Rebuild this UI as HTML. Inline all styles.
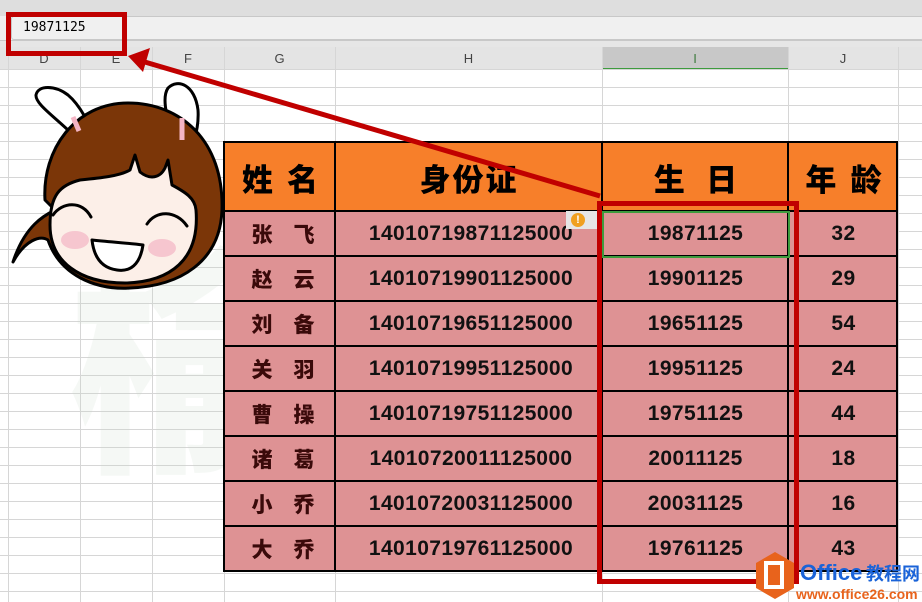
<!DOCTYPE html>
<html><head><meta charset="utf-8"><style>
body{margin:0;width:922px;height:602px;overflow:hidden;background:#fff;position:relative;font-family:"Liberation Sans","Noto Sans CJK SC",sans-serif}
.a{position:absolute}
.grid{position:absolute;left:0;top:69px;width:922px;height:533px;
background-image:linear-gradient(#d6d6d6 1px,transparent 1px);background-size:100% 18px;}
.vl{position:absolute;top:47px;width:1px;height:555px;background:#d6d6d6}
.hd{position:absolute;top:47px;height:22px;font-size:13px;color:#444;text-align:center;line-height:24px}
.cell{position:absolute;display:flex;align-items:center;justify-content:center;font-weight:bold;color:#111;white-space:pre}
.num{font-size:21px;font-family:"Liberation Sans",sans-serif;letter-spacing:0.4px}
.cj{font-family:"Noto Sans CJK SC",sans-serif;font-weight:900;font-size:21px;color:#3a0a0a}
.h{font-family:"Noto Sans CJK SC",sans-serif;font-weight:900;font-size:31px;color:#000}
</style></head><body>
<div class="a" style="left:0;top:0;width:922px;height:16px;background:#dedede"></div>
<div class="a" style="left:0;top:16px;width:922px;height:24px;background:#efefef;border-bottom:1px solid #c8c8c8"></div>
<div class="a" style="left:11px;top:16px;width:911px;height:22px;border:1px solid #c8c8c8;border-radius:3px;background:#f0f0f0"></div>
<div class="a" style="left:23px;top:20px;font-family:'DejaVu Sans Mono',monospace;font-size:13px;color:#000">19871125</div>
<div class="a" style="left:0;top:41px;width:922px;height:6px;background:#e6e6e6"></div>
<div class="a" style="left:0;top:47px;width:922px;height:22px;background:#e4e4e4;border-bottom:1px solid #c4c4c4"></div>
<div class="a" style="left:602px;top:47px;width:186px;height:21px;background:#c8c8c8;border-bottom:2px solid #3e9b3e"></div>
<div class="hd" style="left:8px;width:72px">D</div>
<div class="hd" style="left:80px;width:72px">E</div>
<div class="hd" style="left:152px;width:72px">F</div>
<div class="hd" style="left:224px;width:111px">G</div>
<div class="hd" style="left:335px;width:267px">H</div>
<div class="hd" style="left:602px;width:186px;color:#3e7b3e">I</div>
<div class="hd" style="left:788px;width:110px">J</div>
<div class="grid"></div>
<div class="vl" style="left:8px"></div><div class="vl" style="left:80px"></div><div class="vl" style="left:152px"></div><div class="vl" style="left:224px"></div><div class="vl" style="left:335px"></div><div class="vl" style="left:602px"></div><div class="vl" style="left:788px"></div><div class="vl" style="left:898px"></div>

<div class="a" style="left:70px;top:230px;font-family:'Noto Sans CJK SC';font-weight:900;font-size:240px;color:rgba(200,215,200,0.18);line-height:1">榆</div>

<div class="a" style="left:223px;top:141px;width:675px;height:431px;background:#de9294"></div>
<div class="a" style="left:223px;top:141px;width:675px;height:70px;background:#f77f2a"></div>
<div class="a" style="left:223px;top:141px;width:671px;height:427px;border:2px solid #000"></div>
<div class="a" style="left:334px;top:141px;width:2px;height:431px;background:#000"></div>
<div class="a" style="left:601px;top:141px;width:2px;height:431px;background:#000"></div>
<div class="a" style="left:787px;top:141px;width:2px;height:431px;background:#000"></div>
<div class="a" style="left:223px;top:210px;width:675px;height:2px;background:#000"></div>
<div class="a" style="left:223px;top:255px;width:675px;height:2px;background:#000"></div>
<div class="a" style="left:223px;top:300px;width:675px;height:2px;background:#000"></div>
<div class="a" style="left:223px;top:345px;width:675px;height:2px;background:#000"></div>
<div class="a" style="left:223px;top:390px;width:675px;height:2px;background:#000"></div>
<div class="a" style="left:223px;top:435px;width:675px;height:2px;background:#000"></div>
<div class="a" style="left:223px;top:480px;width:675px;height:2px;background:#000"></div>
<div class="a" style="left:223px;top:525px;width:675px;height:2px;background:#000"></div>

<div class="cell h" style="left:225px;top:143px;width:110px;height:68px">姓  名</div>
<div class="cell h" style="left:336px;top:143px;width:266px;height:68px;letter-spacing:2px">身份证</div>
<div class="cell h" style="left:603px;top:143px;width:185px;height:68px">生   日</div>
<div class="cell h" style="left:789px;top:143px;width:109px;height:68px">年  龄</div>

<div id="rows"></div>
<script>
var d=[["张　飞","14010719871125000","19871125","32"],["赵　云","14010719901125000","19901125","29"],["刘　备","14010719651125000","19651125","54"],["关　羽","14010719951125000","19951125","24"],["曹　操","14010719751125000","19751125","44"],["诸　葛","14010720011125000","20011125","18"],["小　乔","14010720031125000","20031125","16"],["大　乔","14010719761125000","19761125","43"]];
var h="";d.forEach(function(r,i){var t=212+i*45;
h+='<div class="cell cj" style="left:225px;top:'+t+'px;width:110px;height:43px;padding-left:6px;box-sizing:border-box">'+r[0]+'</div>';
h+='<div class="cell num" style="left:336px;top:'+t+'px;width:266px;height:43px;padding-left:4px;box-sizing:border-box">'+r[1]+'</div>';
h+='<div class="cell num" style="left:603px;top:'+t+'px;width:185px;height:43px">'+r[2]+'</div>';
h+='<div class="cell num" style="left:789px;top:'+t+'px;width:109px;height:43px">'+r[3]+'</div>';});
document.getElementById("rows").innerHTML=h;
</script>
<div class="a" style="left:566px;top:211px;width:34px;height:18px;background:#e6e6e6"></div>
<div class="a" style="left:571px;top:213px;width:14px;height:14px;border-radius:50%;background:#f0a020;color:#fff;font-size:11px;font-weight:bold;text-align:center;line-height:14px">!</div>
<div class="a" style="left:602px;top:211px;width:184px;height:43px;border:2px solid #3e9b3e"></div>

<div class="a" style="left:597px;top:201px;width:192px;height:373px;border:5px solid #c00000"></div>
<div class="a" style="left:6px;top:12px;width:111px;height:34px;border:5px solid #c00000"></div>
<svg class="a" style="left:0;top:0" width="922" height="602">
<line x1="600" y1="196" x2="138" y2="60" stroke="#c00000" stroke-width="5"/>
<polygon points="128,56 150,48 143,72" fill="#c00000"/>
<g stroke="#000" stroke-width="3" stroke-linejoin="round">
<path d="M80,142 C60,120 35,105 36,95 C38,85 55,85 68,95 C80,105 90,125 96,140 Z" fill="#fff"/>
<path d="M175,148 C170,125 160,100 168,88 C178,78 195,85 198,110 C199,125 195,140 190,152 Z" fill="#fff"/>
<path d="M55,210 C45,215 25,225 13,262 C25,240 40,235 48,240 C60,275 95,290 130,288 C180,286 220,262 222,210 C224,140 180,103 128,103 C75,103 42,150 45,200 Z" fill="#7b3608"/>
<path d="M50,225 C50,195 60,185 80,180 C100,178 120,176 130,170 L135,155 L140,172 C150,180 160,178 165,168 L168,160 L172,185 C185,192 195,198 196,210 C200,260 170,282 125,283 C80,283 50,262 50,225 Z" fill="#fcefe8"/>
<path d="M92,240 C110,242 128,243 143,245 C140,265 130,272 117,270 C102,268 94,258 92,240 Z" fill="#fff"/>
</g>
<g stroke="#000" stroke-width="3" fill="none" stroke-linecap="round">
<path d="M53,215 C62,202 82,200 91,217"/><path d="M147,224 C156,210 176,210 187,226"/>
</g>
<ellipse cx="75" cy="240" rx="14" ry="9" fill="#f4b5c5" opacity=".7"/>
<ellipse cx="162" cy="248" rx="14" ry="9" fill="#f4b5c5" opacity=".7"/>
<path d="M73,117 l6,14" stroke="#f4b5c5" stroke-width="5"/><path d="M182,118 l0,22" stroke="#f4b5c5" stroke-width="5"/>
<polygon points="775,552 794,563 794,588 775,599 756,588 756,563" fill="#e8631c"/>
<rect x="766" y="563" width="16" height="24" fill="none" stroke="#fff" stroke-width="4"/>
<text x="800" y="580" font-family="Liberation Sans" font-weight="bold" font-size="22" fill="#1a63d8">Office</text>
<text x="866" y="580" font-family="Noto Sans CJK SC" font-weight="bold" font-size="18" fill="#1a63d8">教程网</text>
<text x="796" y="599" font-family="Liberation Sans" font-weight="bold" font-size="14" fill="#e8631c">www.office26.com</text>
</svg>
</body></html>
